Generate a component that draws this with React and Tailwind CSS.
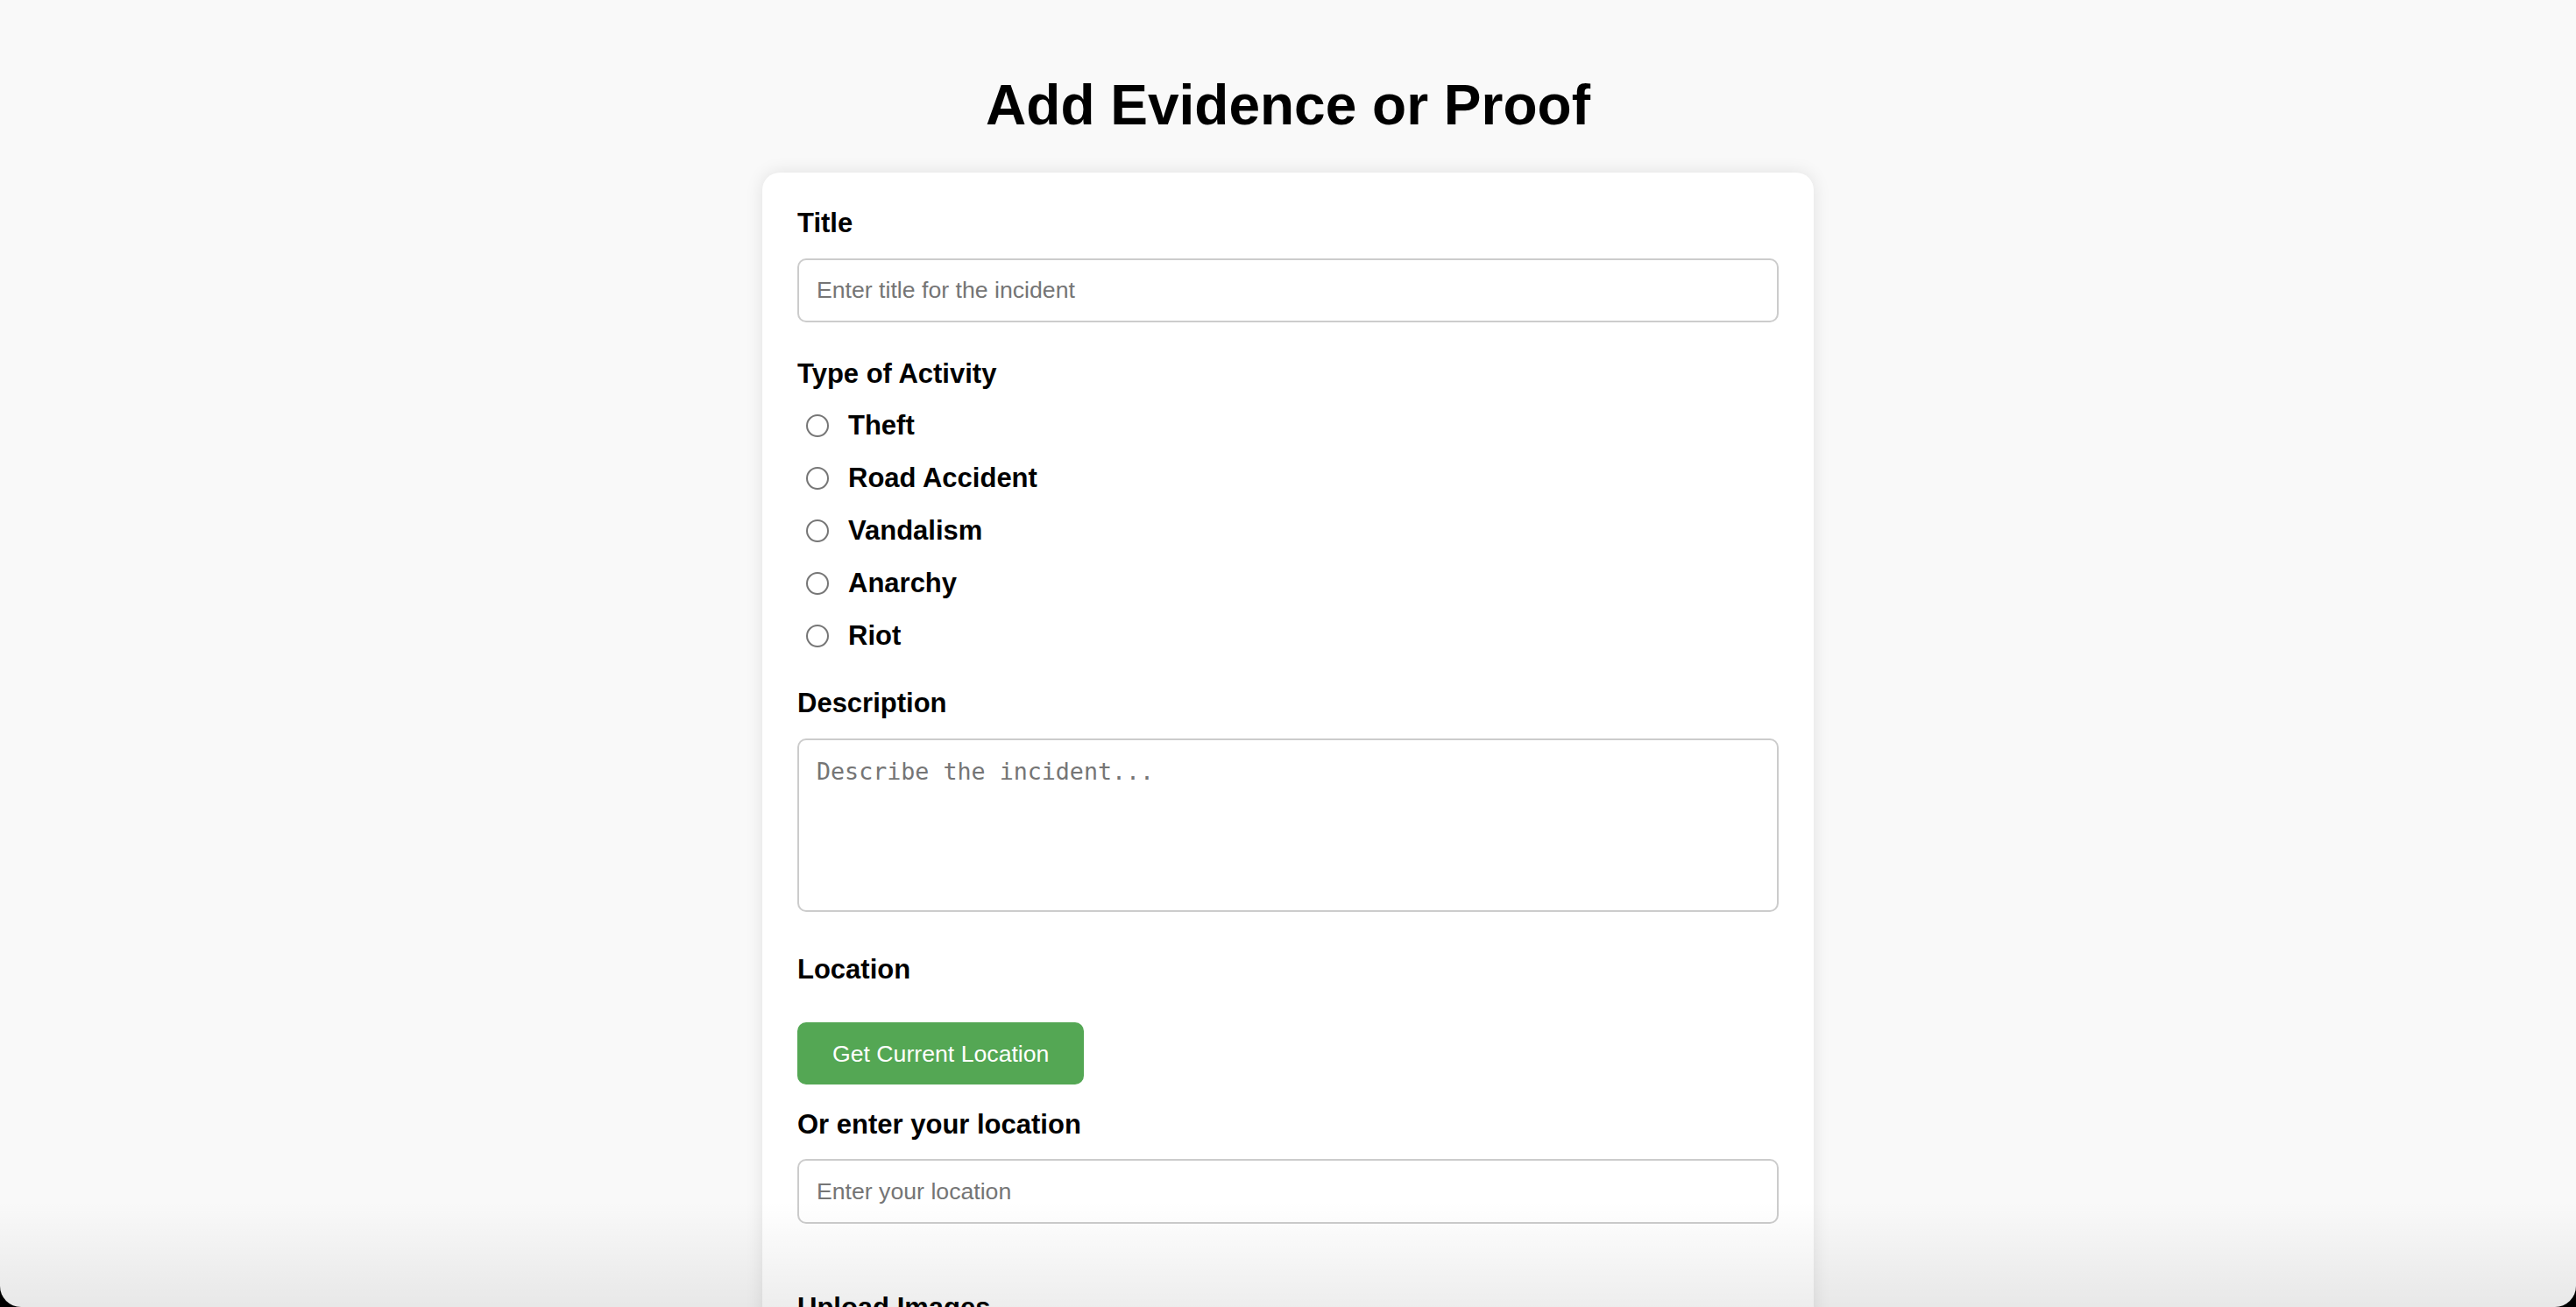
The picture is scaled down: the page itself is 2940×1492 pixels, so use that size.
import { useState } from "react";

const activities = ["Theft", "Road Accident", "Vandalism", "Anarchy", "Riot"];

export default function App() {
  const [activity, setActivity] = useState("");

  return (
    <div className="bg-black min-h-screen">
      <div className="relative h-[1492px] overflow-hidden rounded-b-[24px] bg-[#f9f9f9] font-['Liberation_Sans',Arial,sans-serif] text-black">
        <h1 className="pt-[83px] text-center text-[64px] leading-[74px] font-bold">
          Add Evidence or Proof
        </h1>

        {/* FORM CARD */}
        <div className="mx-auto mt-[40px] w-[1200px] rounded-[20px] bg-white px-[40px] pt-[40px] pb-[80px] shadow-[0_0_20px_rgba(0,0,0,0.1)]">
          <label className="block text-[31px] leading-[36px] font-bold">Title</label>
          <input
            type="text"
            placeholder="Enter title for the incident"
            className="mt-[22px] block h-[73px] w-full rounded-[10px] border-2 border-[#cccccc] px-[20px] text-[26.67px] outline-none placeholder:text-[#757575]"
          />

          <label className="mt-[41px] block text-[31px] leading-[36px] font-bold">
            Type of Activity
          </label>
          <div className="mt-[23px] flex flex-col gap-[24px]">
            {activities.map((a) => (
              <label key={a} className="flex items-center text-[31px] leading-[36px] font-bold">
                <input
                  type="radio"
                  name="activity"
                  checked={activity === a}
                  onChange={() => setActivity(a)}
                  className="ml-[10px] mr-[22px] h-[26px] w-[26px] appearance-none rounded-full border-2 border-[#767676] bg-white checked:border-[8px] checked:border-[#1a73e8]"
                />
                {a}
              </label>
            ))}
          </div>

          <label className="mt-[41px] block text-[31px] leading-[36px] font-bold">Description</label>
          <textarea
            placeholder="Describe the incident..."
            className="mt-[22px] block h-[198px] w-full resize-none rounded-[10px] border-2 border-[#cccccc] px-[20px] py-[20px] font-['DejaVu_Sans_Mono',monospace] text-[26.67px] leading-[31px] outline-none placeholder:text-[#757575]"
          />

          <label className="mt-[48px] block text-[31px] leading-[36px] font-bold">Location</label>
          <button className="mt-[42px] block h-[71px] rounded-[10px] bg-[#54a754] px-[40px] text-[26.67px] text-white">
            Get Current Location
          </button>

          <label className="mt-[28px] block text-[31px] leading-[36px] font-bold">
            Or enter your location
          </label>
          <input
            type="text"
            placeholder="Enter your location"
            className="mt-[21px] block h-[74px] w-full rounded-[10px] border-2 border-[#cccccc] px-[20px] text-[26.67px] outline-none placeholder:text-[#757575]"
          />

          <label className="mt-[78px] block text-[31px] leading-[36px] font-bold">Upload Images</label>
          <input type="file" multiple className="mt-[22px] block text-[26.67px]" />
        </div>

        {/* bottom window shade */}
        <div className="pointer-events-none absolute inset-x-0 bottom-0 h-[120px] bg-gradient-to-b from-transparent to-black/[0.07]" />
      </div>
    </div>
  );
}
